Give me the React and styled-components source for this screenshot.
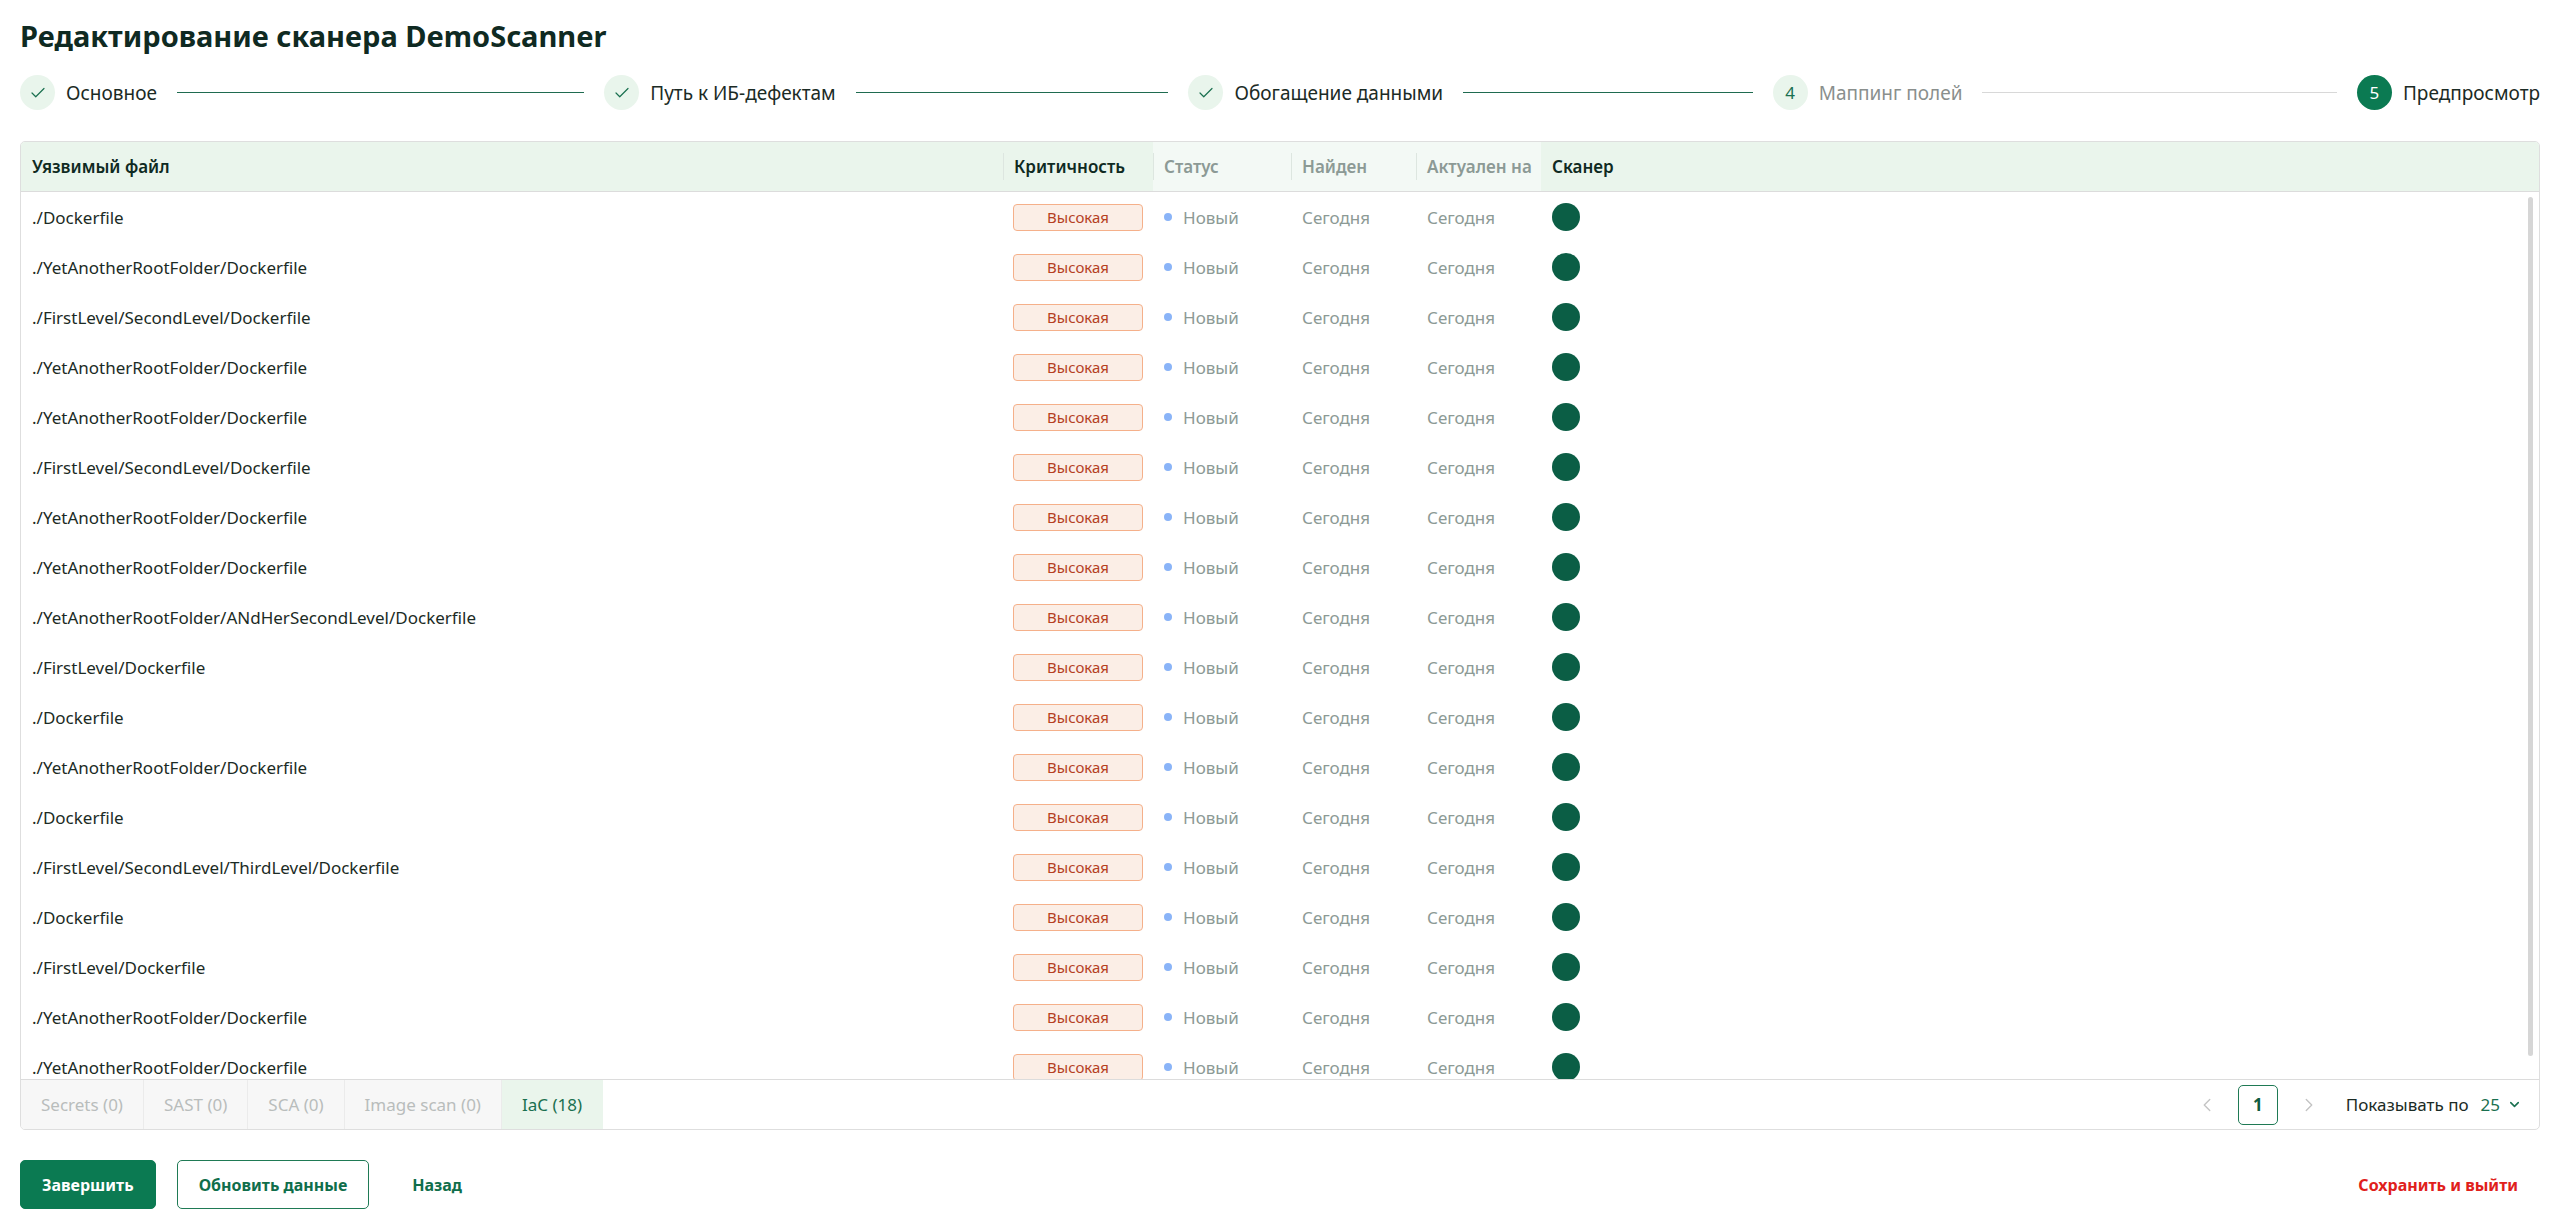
import React from "react";
import styled, { createGlobalStyle } from "styled-components";
import { Check, ChevronLeft, ChevronRight, ChevronDown } from "lucide-react";

const GlobalStyle = createGlobalStyle`
  html, body {
    margin: 0;
    padding: 0;
    background: #fff;
  }
  body {
    font-family: "Noto Sans", "Open Sans", sans-serif;
    color: #1b2b25;
  }
  * {
    box-sizing: border-box;
  }
`;

const Page = styled.div`
  padding: 18px 20px 0 20px;
  display: flex;
  flex-direction: column;
`;

const Title = styled.h1`
  margin: 0;
  font-size: 29px;
  line-height: 36px;
  font-weight: 700;
  color: #0f2a22;
`;

const Steps = styled.div`
  margin-top: 21px;
  height: 35px;
  display: flex;
  align-items: center;
`;

const Step = styled.div`
  display: flex;
  align-items: center;
  flex: ${(p) => (p.last ? "none" : "1")};
  min-width: 0;
`;

const StepCircle = styled.div`
  width: 35px;
  height: 35px;
  border-radius: 50%;
  flex: none;
  display: flex;
  align-items: center;
  justify-content: center;
  font-size: 17px;
  background: ${(p) => (p.active ? "#0b7a52" : "#e9f5ec")};
  color: ${(p) => (p.active ? "#fff" : "#1a7050")};
`;

const StepLabel = styled.span`
  margin-left: 11px;
  font-size: 19px;
  white-space: nowrap;
  color: ${(p) => (p.muted ? "#8a8f8d" : "#1b2b25")};
`;

const StepLine = styled.div`
  flex: 1;
  height: 1px;
  margin: 0 20px;
  background: ${(p) => (p.done ? "#1f6b50" : "#d8d8d8")};
`;

const Card = styled.div`
  margin-top: 31px;
  border: 1px solid #dedede;
  border-radius: 5px;
  overflow: hidden;
  display: flex;
  flex-direction: column;
`;

const cols = "982px 150px 138px 125px 125px 1fr";

const HeadRow = styled.div`
  display: grid;
  grid-template-columns: ${cols};
  height: 50px;
  background: #eaf5ec;
  border-bottom: 1px solid #dcdcdc;
`;

const HeadCell = styled.div`
  position: relative;
  display: flex;
  align-items: center;
  padding-left: 11px;
  font-size: 17px;
  font-weight: 600;
  white-space: nowrap;
  background: ${(p) => (p.muted ? "#f3f9f5" : "transparent")};
  color: ${(p) => (p.muted ? "#8c9a95" : "#0f2a22")};
  &::before {
    content: "";
    display: ${(p) => (p.sep ? "block" : "none")};
    position: absolute;
    left: 0;
    top: 11px;
    bottom: 11px;
    width: 1px;
    background: #dde6e0;
  }
`;

const BodyWrap = styled.div`
  position: relative;
`;

const Body = styled.div`
  height: 887px;
  overflow-y: scroll;
  scrollbar-width: none;
  &::-webkit-scrollbar {
    display: none;
  }
`;

/* the list's scrollbar thumb, drawn over the rows */
const ScrollThumb = styled.div`
  position: absolute;
  top: 5px;
  right: 6px;
  width: 5px;
  height: 859px;
  border-radius: 3px;
  background: #d6d6d6;
`;

const Row = styled.div`
  display: grid;
  grid-template-columns: ${cols};
  height: 50px;
`;

const Cell = styled.div`
  display: flex;
  align-items: center;
  padding-left: ${(p) => (p.tight ? "10px" : "11px")};
  font-size: 17px;
  white-space: nowrap;
  color: ${(p) => (p.muted ? "#8c9a95" : "#1b2b25")};
`;

const Badge = styled.span`
  width: 130px;
  height: 27px;
  display: flex;
  align-items: center;
  justify-content: center;
  border: 1px solid #f5b08a;
  border-radius: 4px;
  background: #fbeee6;
  color: #b5401f;
  font-size: 15px;
`;

const Dot = styled.span`
  width: 8px;
  height: 8px;
  border-radius: 50%;
  background: #8ab4f8;
  margin-right: 11px;
`;

const ScannerMark = styled.span`
  width: 28px;
  height: 28px;
  border-radius: 50%;
  background: #0b5e45;
`;

const Footer = styled.div`
  height: 50px;
  border-top: 1px solid #dcdcdc;
  display: flex;
  align-items: stretch;
  justify-content: space-between;
`;

const Tabs = styled.div`
  display: flex;
`;

const Tab = styled.div`
  display: flex;
  align-items: center;
  padding: 0 20px;
  font-size: 17px;
  border-right: 1px solid ${(p) => (p.active ? "transparent" : "#ebebeb")};
  background: ${(p) => (p.active ? "#eaf5ec" : "#f7f7f7")};
  color: ${(p) => (p.active ? "#1a7050" : "#b9bdbc")};
`;

const Pager = styled.div`
  display: flex;
  align-items: center;
  padding-right: 17px;
  color: #c4c4c4;
`;

const PageBox = styled.div`
  width: 40px;
  height: 40px;
  margin: 0 20px;
  border: 1px solid #1f7a55;
  border-radius: 5px;
  display: flex;
  align-items: center;
  justify-content: center;
  font-size: 17px;
  font-weight: 700;
  color: #0f5c40;
`;

const PerPage = styled.span`
  margin-left: 26px;
  font-size: 17px;
  color: #1b2b25;
`;

const PerPageValue = styled.span`
  margin-left: 12px;
  font-size: 17px;
  color: #1a7050;
  display: flex;
  align-items: center;
  gap: 7px;
`;

const Actions = styled.div`
  margin-top: 30px;
  display: flex;
  align-items: center;
  gap: 21px;
`;

const Button = styled.button`
  height: 49px;
  padding: 0 21px;
  border-radius: 5px;
  font-family: inherit;
  font-size: 16px;
  font-weight: 700;
  cursor: pointer;
  border: 1px solid
    ${(p) => (p.variant === "primary" ? "#0b7a52" : p.variant === "outline" ? "#1f7a55" : "transparent")};
  background: ${(p) => (p.variant === "primary" ? "#0b7a52" : "#fff")};
  color: ${(p) => (p.variant === "primary" ? "#fff" : p.variant === "danger" ? "#e0201b" : "#0f6e4b")};
`;

const Spacer = styled.div`
  flex: 1;
`;

const files = [
  "./Dockerfile",
  "./YetAnotherRootFolder/Dockerfile",
  "./FirstLevel/SecondLevel/Dockerfile",
  "./YetAnotherRootFolder/Dockerfile",
  "./YetAnotherRootFolder/Dockerfile",
  "./FirstLevel/SecondLevel/Dockerfile",
  "./YetAnotherRootFolder/Dockerfile",
  "./YetAnotherRootFolder/Dockerfile",
  "./YetAnotherRootFolder/ANdHerSecondLevel/Dockerfile",
  "./FirstLevel/Dockerfile",
  "./Dockerfile",
  "./YetAnotherRootFolder/Dockerfile",
  "./Dockerfile",
  "./FirstLevel/SecondLevel/ThirdLevel/Dockerfile",
  "./Dockerfile",
  "./FirstLevel/Dockerfile",
  "./YetAnotherRootFolder/Dockerfile",
  "./YetAnotherRootFolder/Dockerfile",
];

const steps = [
  { label: "Основное", done: true },
  { label: "Путь к ИБ-дефектам", done: true },
  { label: "Обогащение данными", done: true },
  { label: "Маппинг полей", num: 4 },
];

const tabs = [
  { label: "Secrets (0)" },
  { label: "SAST (0)" },
  { label: "SCA (0)" },
  { label: "Image scan (0)" },
  { label: "IaC (18)", active: true },
];

export default function App() {
  return (
    <Page>
      <GlobalStyle />
      <Title>Редактирование сканера DemoScanner</Title>

      <Steps>
        {steps.map((s) => (
          <Step key={s.label}>
            <StepCircle>
              {s.done ? <Check size={18} strokeWidth={1.6} /> : s.num}
            </StepCircle>
            <StepLabel muted={!s.done}>{s.label}</StepLabel>
            <StepLine done={s.done} />
          </Step>
        ))}
        <Step last>
          <StepCircle active>5</StepCircle>
          <StepLabel>Предпросмотр</StepLabel>
        </Step>
      </Steps>

      <Card>
        <HeadRow>
          <HeadCell>Уязвимый файл</HeadCell>
          <HeadCell sep>Критичность</HeadCell>
          <HeadCell sep muted>Статус</HeadCell>
          <HeadCell sep muted>Найден</HeadCell>
          <HeadCell sep muted>Актуален на</HeadCell>
          <HeadCell>Сканер</HeadCell>
        </HeadRow>

        <BodyWrap>
          <Body>
            {files.map((f, i) => (
              <Row key={i}>
                <Cell>{f}</Cell>
                <Cell tight>
                  <Badge>Высокая</Badge>
                </Cell>
                <Cell muted>
                  <Dot />
                  Новый
                </Cell>
                <Cell muted>Сегодня</Cell>
                <Cell muted>Сегодня</Cell>
                <Cell>
                  <ScannerMark />
                </Cell>
              </Row>
            ))}
          </Body>
          <ScrollThumb />
        </BodyWrap>

        <Footer>
          <Tabs>
            {tabs.map((t) => (
              <Tab key={t.label} active={t.active}>
                {t.label}
              </Tab>
            ))}
          </Tabs>
          <Pager>
            <ChevronLeft size={22} strokeWidth={1.5} />
            <PageBox>1</PageBox>
            <ChevronRight size={22} strokeWidth={1.5} />
            <PerPage>Показывать по</PerPage>
            <PerPageValue>
              25 <ChevronDown size={15} strokeWidth={2.5} />
            </PerPageValue>
          </Pager>
        </Footer>
      </Card>

      <Actions>
        <Button variant="primary">Завершить</Button>
        <Button variant="outline">Обновить данные</Button>
        <Button>Назад</Button>
        <Spacer />
        <Button variant="danger">Сохранить и выйти</Button>
      </Actions>
    </Page>
  );
}
